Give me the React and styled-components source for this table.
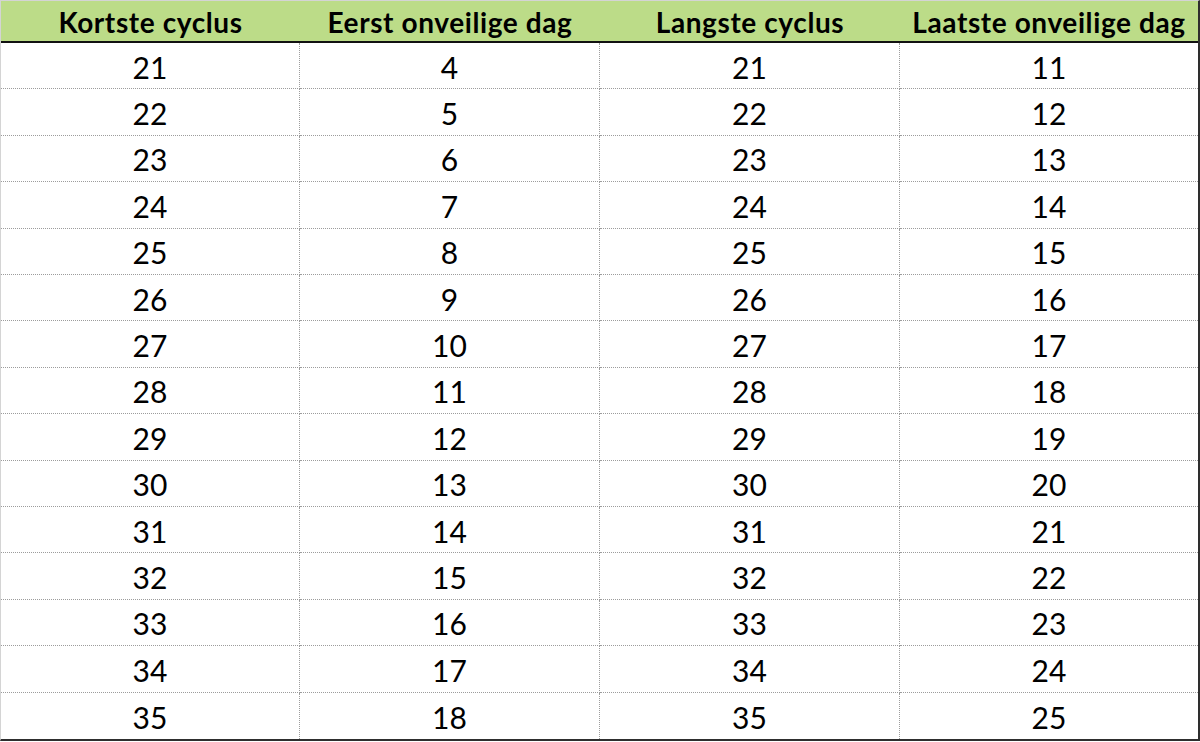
import React from 'react';
import styled, { createGlobalStyle } from 'styled-components';

const GlobalStyle = createGlobalStyle`
  * { box-sizing: border-box; }
  html, body { margin: 0; padding: 0; background: #fff; }
`;

const columns = ['Kortste cyclus', 'Eerst onveilige dag', 'Langste cyclus', 'Laatste onveilige dag'];

const rows = Array.from({ length: 15 }, (_, i) => [21 + i, 4 + i, 21 + i, 11 + i]);

const Sheet = styled.div`
  width: 1200px;
  height: 741px;
  display: flex;
  flex-direction: column;
  border-top: 1px solid #d4d4d4;
  border-left: 1px solid #d4d4d4;
  border-right: 2px solid #2e2e2e;
  border-bottom: 2px solid #2e2e2e;
  font-family: Lato, 'Open Sans', sans-serif;
  color: #000;
`;

const HeaderRow = styled.div`
  display: grid;
  grid-template-columns: 299px 300px 300px 1fr;
  height: 42px;
  background: #bcdc88;
  border-bottom: 2px solid #111;
`;

const HeadCell = styled.div`
  display: flex;
  align-items: center;
  justify-content: center;
  font-size: 28px;
  font-weight: 700;
  white-space: nowrap;
  letter-spacing: 0.6px;
  padding-top: 1px;
`;

const Body = styled.div`
  flex: 1;
  display: grid;
  grid-template-columns: 299px 300px 300px 1fr;
  grid-template-rows: repeat(15, 1fr);
`;

const Cell = styled.div`
  display: flex;
  align-items: center;
  justify-content: center;
  font-size: 30px;
  padding-top: 2px;
  border-right: ${({ last }) => (last ? 'none' : '1px dotted #9c9c9c')};
  border-bottom: ${({ bottom }) => (bottom ? 'none' : '1px dotted #9c9c9c')};
`;

export default function App() {
  return (
    <>
      <GlobalStyle />
      <Sheet>
        <HeaderRow>
          {columns.map((c) => (
            <HeadCell key={c}>{c}</HeadCell>
          ))}
        </HeaderRow>
        <Body>
          {rows.map((r, i) =>
            r.map((v, j) => (
              <Cell key={`${i}-${j}`} last={j === 3} bottom={i === rows.length - 1}>
                {v}
              </Cell>
            ))
          )}
        </Body>
      </Sheet>
    </>
  );
}
